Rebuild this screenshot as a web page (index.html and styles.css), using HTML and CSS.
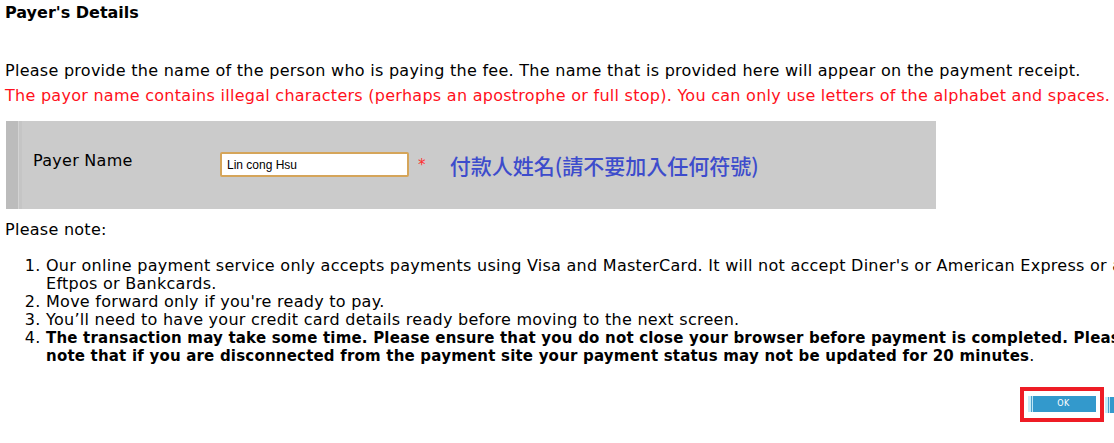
FILE: index.html
```html
<!DOCTYPE html>
<html lang="en">
<head>
<meta charset="utf-8">
<title>Payer's Details</title>
<link rel="stylesheet" href="styles.css">
</head>
<body>
<div class="page">
  <h3 class="title">Payer's Details</h3>
  <p class="intro">Please provide the name of the person who is paying the fee. The name that is provided here will appear on the payment receipt.</p>
  <p class="error">The payor name contains illegal characters (perhaps an apostrophe or full stop). You can only use letters of the alphabet and spaces.</p>
  <div class="panel">
    <div class="panel-row">
      <span class="label">Payer Name</span>
      <input class="name-input" type="text" value="Lin cong Hsu">
      <span class="req">*</span>
      <span class="hint">付款人姓名(請不要加入任何符號)</span>
    </div>
  </div>
  <p class="note">Please note:</p>
  <ol class="notes">
    <li>Our online payment service only accepts payments using Visa and MasterCard. It will not accept Diner's or American Express or any Eftpos or Bankcards.</li>
    <li>Move forward only if you're ready to pay.</li>
    <li>You’ll need to have your credit card details ready before moving to the next screen.</li>
    <li><strong class="strong">The transaction may take some time. Please ensure that you do not close your browser before payment is completed. Please note that if you are disconnected from the payment site your payment status may not be updated for 20 minutes</strong>.</li>
  </ol>
  <div class="actions">
    <div class="highlight"><button class="btn" type="button">OK</button></div>
    <button class="btn" type="button">Cancel</button>
  </div>
</div>
</body>
</html>
```
FILE: styles.css
```css
html, body {
  margin: 0;
  padding: 0;
  overflow: hidden;
  background: #ffffff;
}
body {
  font-family: "DejaVu Sans", Verdana, sans-serif;
  font-size: 16px;
  letter-spacing: 0.27px;
  color: #000;
}
.page {
  width: 1168px;
  padding: 3px 0 0 5px;
}
.title {
  margin: 0;
  font-size: 16px;
  font-weight: bold;
  letter-spacing: 0;
  line-height: 19px;
}
.intro {
  margin: 39px 0 0 0;
  line-height: 20px;
}
.error {
  margin: 5px 0 0 0;
  line-height: 20px;
  color: #ff1020;
}
.panel {
  margin: 15px 0 0 1px;
  width: 918px;
  height: 88px;
  background: #cbcbcb;
  border-left: 12px solid #bcbcbc;
  box-shadow: inset 1px 0 0 #d3d3d3, inset 4px 0 0 #c5c5c5;
}
.panel-row {
  display: flex;
  align-items: center;
  padding: 31px 0 0 15px;
}
.label {
  flex: 0 0 187px;
  line-height: 20px;
  margin-top: -8px;
}
.name-input {
  box-sizing: border-box;
  width: 189px;
  height: 25px;
  margin: 0;
  padding: 0 0 0 5px;
  border: 2px solid #d5a55a;
  border-radius: 2px;
  background: #fff;
  font-family: "Liberation Sans", Arial, sans-serif;
  font-size: 12px;
  letter-spacing: 0;
  color: #000;
  outline: none;
}
.req {
  margin-left: 9px;
  color: #ff3030;
  font-size: 15px;
  line-height: 20px;
}
.hint {
  margin-left: 24px;
  font-family: "Noto Sans CJK TC", "Noto Sans CJK SC", sans-serif;
  font-size: 21px;
  font-weight: 500;
  letter-spacing: 0;
  color: #3d4ccc;
  line-height: 24px;
}
.note {
  margin: 11px 0 0 0;
  line-height: 20px;
}
.notes {
  margin: 17px 0 0 0;
  padding-left: 41px;
  line-height: 18px;
}
.strong {
  font-size: 15px;
  letter-spacing: 0.2px;
}
.actions {
  display: flex;
  justify-content: flex-end;
  align-items: center;
  margin-top: 22px;
}
.highlight {
  border: 4px solid #ee1c25;
  padding: 5px 4px 6px 4px;
  display: flex;
}
.btn {
  box-sizing: border-box;
  width: 68px;
  height: 16px;
  margin: 0;
  padding: 0;
  border: 0;
  border-left: 3px solid #c6ecf8;
  background: #3399cc;
  box-shadow: inset 1px 0 0 #4b9fcb, inset 2px 0 0 #bfe6f5;
  color: #fff;
  font-family: "DejaVu Sans", Verdana, sans-serif;
  font-size: 8px;
  letter-spacing: 0.5px;
  line-height: 16px;
}
.actions > .btn {
  margin-left: 1px;
}
```
